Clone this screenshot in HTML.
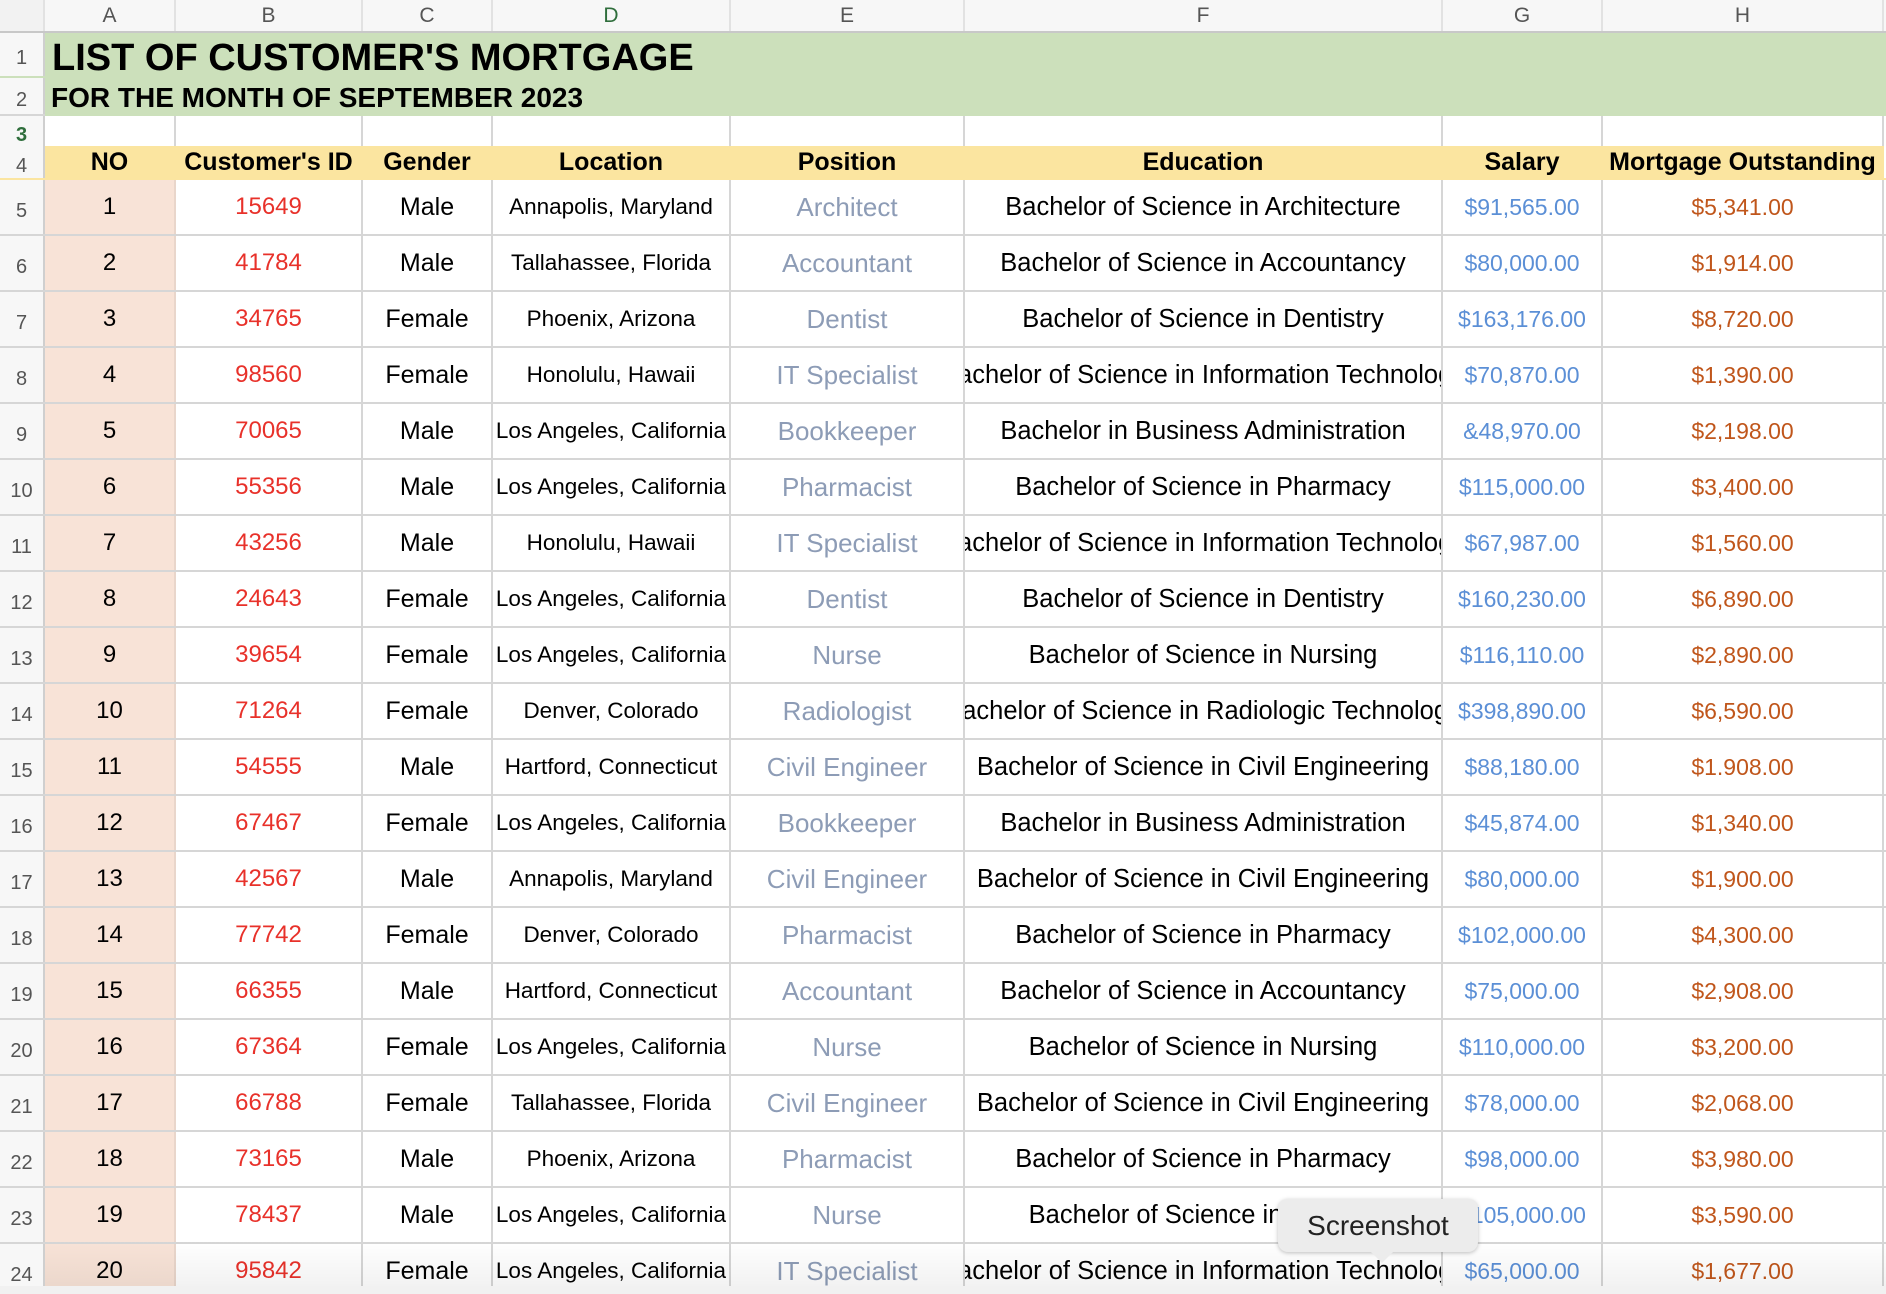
<!DOCTYPE html>
<html><head><meta charset="utf-8"><style>
html,body{margin:0;padding:0;width:1886px;height:1294px;overflow:hidden;background:#fff;font-family:"Liberation Sans",sans-serif;position:relative;}
.row{display:flex;box-sizing:border-box;border-bottom:2px solid #d6d6d6;height:56px;width:1886px;}
.c{box-sizing:border-box;border-right:2px solid #d6d6d6;overflow:hidden;display:flex;align-items:center;justify-content:center;white-space:nowrap;font-size:23px;flex:none;}
.c:nth-child(1){width:45px;background:#f7f7f7;color:#555;font-size:20px;border-right-color:#cfcfcf;padding-top:8px;}
.c:nth-child(2){width:131px}.c:nth-child(3){width:187px}.c:nth-child(4){width:130px}.c:nth-child(5){width:238px}
.c:nth-child(6){width:234px}.c:nth-child(7){width:478px}.c:nth-child(8){width:160px}.c:nth-child(9){width:281px}
.c:nth-child(10){width:2px;border:none}
.ch{height:33px;background:#f7f7f7;border-bottom-color:#c8c8c8;}
.ch .c{color:#555;font-size:21px;border-right-color:#e2e2e2;padding-top:0}
.ch .c.d{color:#2f6e3c}
.g{position:absolute;left:45px;top:33px;width:1841px;height:83px;background:#cce0bb;font-weight:bold;color:#000;}
.t1{position:absolute;left:7px;top:4px;font-size:38px;}
.t2{position:absolute;left:6px;top:49px;font-size:28px;}
.y .c:not(:first-child){background:#fbe5a0;border-right-color:#fbe5a0;font-weight:bold;font-size:25px;}
.y{border-bottom-color:#fbe5a0}
.r .c:nth-child(2){background:#f8e3d7;border-right-color:#e9d6cb;font-size:24px}
.r .c:nth-child(3){color:#e8312a;font-size:24px}
.r .c:nth-child(4){font-size:25px}
.r .c:nth-child(5){font-size:22.5px}
.r .c:nth-child(6){color:#8d9cb6;font-size:26px}
.r .c:nth-child(7){font-size:25.5px}
.r .c:nth-child(8){color:#5b8fd6}
.r .c:nth-child(9){color:#c0561b}
.tip{position:absolute;left:1278px;top:1199px;width:200px;height:53px;background:#ececec;border-radius:10px;box-shadow:0 1px 4px rgba(0,0,0,.25);font-size:28px;color:#222;text-align:center;line-height:53px;}
.tip:after{content:"";position:absolute;left:92px;top:52px;border:12px solid transparent;border-top-color:#ececec;border-bottom:0;}
.bot{position:absolute;left:0;top:1286px;width:1886px;height:8px;background:#f1f1f1;}
.fade{position:absolute;left:45px;top:1240px;width:1841px;height:46px;background:linear-gradient(rgba(0,0,0,0),rgba(0,0,0,.05));pointer-events:none;}
</style></head><body>
<div class="row ch"><div class="c" style="background:#f2f2f2"></div><div class="c">A</div><div class="c">B</div><div class="c">C</div><div class="c d">D</div><div class="c">E</div><div class="c">F</div><div class="c">G</div><div class="c">H</div></div>
<div class="row" style="height:45px;border-bottom-color:#cce0bb"><div class="c">1</div></div>
<div class="row" style="height:38px"><div class="c">2</div></div>
<div class="row" style="height:30px;border-bottom:none"><div class="c" style="color:#2f6e3c;font-weight:bold">3</div><div class="c"></div><div class="c"></div><div class="c"></div><div class="c"></div><div class="c"></div><div class="c"></div><div class="c"></div><div class="c"></div></div>
<div class="row y" style="height:34px"><div class="c">4</div><div class="c">NO</div><div class="c">Customer's ID</div><div class="c">Gender</div><div class="c">Location</div><div class="c">Position</div><div class="c">Education</div><div class="c">Salary</div><div class="c">Mortgage Outstanding</div></div>
<div class="row r"><div class="c">5</div><div class="c">1</div><div class="c">15649</div><div class="c">Male</div><div class="c">Annapolis, Maryland</div><div class="c">Architect</div><div class="c">Bachelor of Science in Architecture</div><div class="c">$91,565.00</div><div class="c">$5,341.00</div></div>
<div class="row r"><div class="c">6</div><div class="c">2</div><div class="c">41784</div><div class="c">Male</div><div class="c">Tallahassee, Florida</div><div class="c">Accountant</div><div class="c">Bachelor of Science in Accountancy</div><div class="c">$80,000.00</div><div class="c">$1,914.00</div></div>
<div class="row r"><div class="c">7</div><div class="c">3</div><div class="c">34765</div><div class="c">Female</div><div class="c">Phoenix, Arizona</div><div class="c">Dentist</div><div class="c">Bachelor of Science in Dentistry</div><div class="c">$163,176.00</div><div class="c">$8,720.00</div></div>
<div class="row r"><div class="c">8</div><div class="c">4</div><div class="c">98560</div><div class="c">Female</div><div class="c">Honolulu, Hawaii</div><div class="c">IT Specialist</div><div class="c">Bachelor of Science in Information Technology</div><div class="c">$70,870.00</div><div class="c">$1,390.00</div></div>
<div class="row r"><div class="c">9</div><div class="c">5</div><div class="c">70065</div><div class="c">Male</div><div class="c">Los Angeles, California</div><div class="c">Bookkeeper</div><div class="c">Bachelor in Business Administration</div><div class="c">&amp;48,970.00</div><div class="c">$2,198.00</div></div>
<div class="row r"><div class="c">10</div><div class="c">6</div><div class="c">55356</div><div class="c">Male</div><div class="c">Los Angeles, California</div><div class="c">Pharmacist</div><div class="c">Bachelor of Science in Pharmacy</div><div class="c">$115,000.00</div><div class="c">$3,400.00</div></div>
<div class="row r"><div class="c">11</div><div class="c">7</div><div class="c">43256</div><div class="c">Male</div><div class="c">Honolulu, Hawaii</div><div class="c">IT Specialist</div><div class="c">Bachelor of Science in Information Technology</div><div class="c">$67,987.00</div><div class="c">$1,560.00</div></div>
<div class="row r"><div class="c">12</div><div class="c">8</div><div class="c">24643</div><div class="c">Female</div><div class="c">Los Angeles, California</div><div class="c">Dentist</div><div class="c">Bachelor of Science in Dentistry</div><div class="c">$160,230.00</div><div class="c">$6,890.00</div></div>
<div class="row r"><div class="c">13</div><div class="c">9</div><div class="c">39654</div><div class="c">Female</div><div class="c">Los Angeles, California</div><div class="c">Nurse</div><div class="c">Bachelor of Science in Nursing</div><div class="c">$116,110.00</div><div class="c">$2,890.00</div></div>
<div class="row r"><div class="c">14</div><div class="c">10</div><div class="c">71264</div><div class="c">Female</div><div class="c">Denver, Colorado</div><div class="c">Radiologist</div><div class="c">Bachelor of Science in Radiologic Technology</div><div class="c">$398,890.00</div><div class="c">$6,590.00</div></div>
<div class="row r"><div class="c">15</div><div class="c">11</div><div class="c">54555</div><div class="c">Male</div><div class="c">Hartford, Connecticut</div><div class="c">Civil Engineer</div><div class="c">Bachelor of Science in Civil Engineering</div><div class="c">$88,180.00</div><div class="c">$1.908.00</div></div>
<div class="row r"><div class="c">16</div><div class="c">12</div><div class="c">67467</div><div class="c">Female</div><div class="c">Los Angeles, California</div><div class="c">Bookkeeper</div><div class="c">Bachelor in Business Administration</div><div class="c">$45,874.00</div><div class="c">$1,340.00</div></div>
<div class="row r"><div class="c">17</div><div class="c">13</div><div class="c">42567</div><div class="c">Male</div><div class="c">Annapolis, Maryland</div><div class="c">Civil Engineer</div><div class="c">Bachelor of Science in Civil Engineering</div><div class="c">$80,000.00</div><div class="c">$1,900.00</div></div>
<div class="row r"><div class="c">18</div><div class="c">14</div><div class="c">77742</div><div class="c">Female</div><div class="c">Denver, Colorado</div><div class="c">Pharmacist</div><div class="c">Bachelor of Science in Pharmacy</div><div class="c">$102,000.00</div><div class="c">$4,300.00</div></div>
<div class="row r"><div class="c">19</div><div class="c">15</div><div class="c">66355</div><div class="c">Male</div><div class="c">Hartford, Connecticut</div><div class="c">Accountant</div><div class="c">Bachelor of Science in Accountancy</div><div class="c">$75,000.00</div><div class="c">$2,908.00</div></div>
<div class="row r"><div class="c">20</div><div class="c">16</div><div class="c">67364</div><div class="c">Female</div><div class="c">Los Angeles, California</div><div class="c">Nurse</div><div class="c">Bachelor of Science in Nursing</div><div class="c">$110,000.00</div><div class="c">$3,200.00</div></div>
<div class="row r"><div class="c">21</div><div class="c">17</div><div class="c">66788</div><div class="c">Female</div><div class="c">Tallahassee, Florida</div><div class="c">Civil Engineer</div><div class="c">Bachelor of Science in Civil Engineering</div><div class="c">$78,000.00</div><div class="c">$2,068.00</div></div>
<div class="row r"><div class="c">22</div><div class="c">18</div><div class="c">73165</div><div class="c">Male</div><div class="c">Phoenix, Arizona</div><div class="c">Pharmacist</div><div class="c">Bachelor of Science in Pharmacy</div><div class="c">$98,000.00</div><div class="c">$3,980.00</div></div>
<div class="row r"><div class="c">23</div><div class="c">19</div><div class="c">78437</div><div class="c">Male</div><div class="c">Los Angeles, California</div><div class="c">Nurse</div><div class="c">Bachelor of Science in Nursing</div><div class="c">$105,000.00</div><div class="c">$3,590.00</div></div>
<div class="row r"><div class="c">24</div><div class="c">20</div><div class="c">95842</div><div class="c">Female</div><div class="c">Los Angeles, California</div><div class="c">IT Specialist</div><div class="c">Bachelor of Science in Information Technology</div><div class="c">$65,000.00</div><div class="c">$1,677.00</div></div>
<div class="g"><div class="t1">LIST OF CUSTOMER'S MORTGAGE</div><div class="t2">FOR THE MONTH OF SEPTEMBER 2023</div></div>
<div class="fade"></div>
<div class="bot"></div>
<div class="tip">Screenshot</div>
</body></html>
